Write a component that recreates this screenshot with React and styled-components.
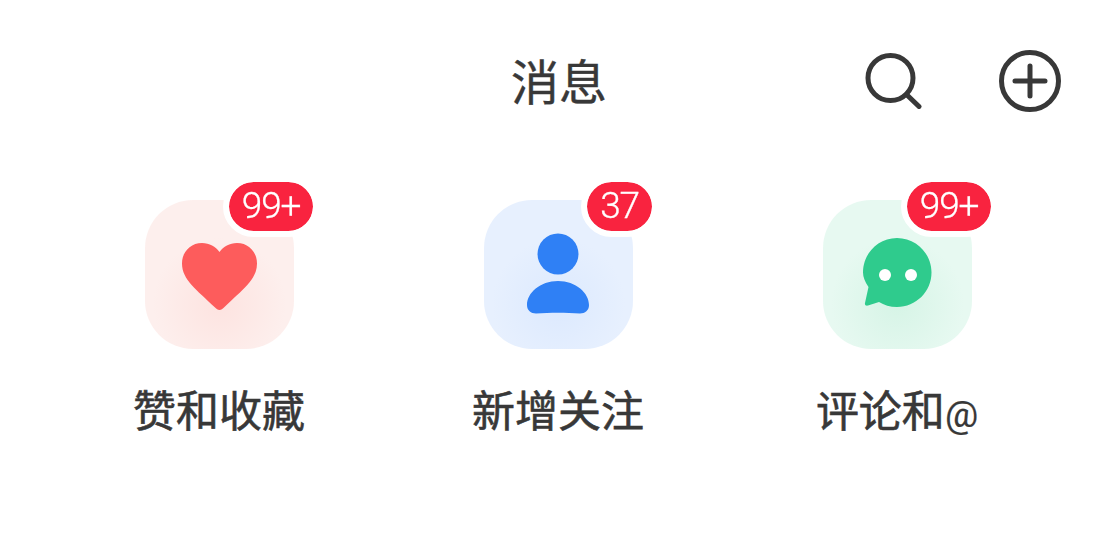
import styled, { createGlobalStyle } from 'styled-components';

const GlobalStyle = createGlobalStyle`
    html, body {
        margin: 0;
        background: #fff;
    }
    body {
        font-family: "Noto Sans CJK SC", "Noto Sans", sans-serif;
    }
`;

const Page = styled.div`
    width: 1114px;
    height: 545px;
    overflow: hidden;
    background: #fff;
`;
const Header = styled.header`
    display: grid;
    grid-template-columns: 1fr auto 1fr;
    align-items: center;
    height: 62px;
    padding: 50px 53px 0 57px;
`;
const Title = styled.h1`
    grid-column: 2;
    margin: -5px 0 0;
    font-size: 48px;
    font-weight: 400;
    line-height: 62px;
    color: #383838;
    -webkit-text-stroke: 0.4px #383838;
`;
const Actions = styled.div`
    grid-column: 3;
    display: flex;
    justify-content: flex-end;
    gap: 77px;
`;
const IconButton = styled.button`
    display: flex;
    padding: 0;
    border: 0;
    background: none;
    color: #383838;
    filter: blur(0.4px);
`;
const Entries = styled.main`
    display: grid;
    grid-template-columns: repeat(3, 339px);
    margin-top: 88px;
    padding-left: 50px;
`;
const Entry = styled.div`
    display: flex;
    flex-direction: column;
    align-items: center;
`;
const Tile = styled.div`
    position: relative;
    width: 149px;
    height: 149px;
    border-radius: 48px;
    background: radial-gradient(circle at 50% 70%, ${(props) => props.$glow} 0, ${(props) => props.$bg} 52%);
`;
const TileIcon = styled.svg`
    display: block;
    filter: blur(0.5px);
`;
const Badge = styled.span`
    position: absolute;
    top: -18px;
    left: ${(props) => props.$left}px;
    display: flex;
    align-items: center;
    justify-content: center;
    box-sizing: border-box;
    width: ${(props) => props.$width}px;
    height: 49px;
    padding-bottom: 2px;
    border-radius: 25px;
    outline: 6px solid #fff;
    background: #f9233f;
    color: #fff;
    font-family: "Roboto", "Noto Sans", sans-serif;
    font-size: 37px;
    font-weight: 300;
    letter-spacing: -1.2px;
    line-height: 1;
    -webkit-text-stroke: 0.3px #fff;
    filter: blur(0.3px);
`;
const Label = styled.div`
    margin-top: 28px;
    margin-left: -1px;
    font-size: 43px;
    font-weight: 400;
    line-height: 62px;
    color: #383838;
    white-space: nowrap;
    -webkit-text-stroke: 0.6px #383838;
`;
const LabelSymbol = styled.span`
    font-family: "Roboto", "Noto Sans", sans-serif;
    font-size: 37px;
    font-weight: 400;
    -webkit-text-stroke: 0.2px #383838;
`;

const Heart = () => (
    <TileIcon width="149" height="149" viewBox="0 0 149 149">
        <path
            d="M74.500 110 C72.800 110 71.500 109 69.500 107 C52 90 37 80 37 63.500 C37 52 45.500 43 57 43 C64.500 43 70.500 46.500 74.500 52 C78.500 46.500 84.500 43 92 43 C103.500 43 112 52 112 63.500 C112 80 97 90 79.500 107 C77.500 109 76.200 110 74.500 110 Z"
            fill="#fd5c5c"
        />
    </TileIcon>
);

const Person = () => (
    <TileIcon width="149" height="149" viewBox="0 0 149 149">
        <circle cx="74" cy="54" r="20.500" fill="#2f80f5" />
        <path
            d="M74 81 C92 81 105 93 105 105 C105 110.500 101 113.500 96 113.500 C82 112.500 66 112.500 52 113.500 C47 113.500 43 110.500 43 105 C43 93 56 81 74 81 Z"
            fill="#2f80f5"
        />
    </TileIcon>
);

const Chat = () => (
    <TileIcon width="149" height="149" viewBox="0 0 149 149">
        <path
            d="M74 38 C93 38 108.500 53.500 108.500 72.500 C108.500 91.500 93 107 74 107 C67 107 61 105 56 102 L45 105.500 C43 106 41.500 105 42 103 L45.500 87 C42 82 40 77 40 72.500 C40 53.500 55 38 74 38 Z"
            fill="#2fcb8d"
        />
        <circle cx="62" cy="75" r="6" fill="#fff" />
        <circle cx="88" cy="75" r="6" fill="#fff" />
    </TileIcon>
);

const entries = [
    { id: 'likes', label: '赞和收藏', count: '99+', bg: '#fdefed', glow: '#fde3e0', left: 84, width: 84, Icon: Heart },
    { id: 'follows', label: '新增关注', count: '37', bg: '#e7f0fe', glow: '#dce9fe', left: 103, width: 65, Icon: Person },
    { id: 'comments', label: '评论和', symbol: '@', count: '99+', bg: '#e7f9f1', glow: '#d6f4e6', left: 84, width: 84, Icon: Chat },
];

const App = () => {
    return (
        <Page>
            <GlobalStyle />
            <Header>
                <Title>消息</Title>
                <Actions>
                    <IconButton aria-label="搜索">
                        <svg width="58" height="60" viewBox="0 0 58 60" fill="none" stroke="currentColor" strokeWidth="5" strokeLinecap="round">
                            <circle cx="26.500" cy="28" r="22.500" />
                            <path d="M42.500 44.500 L55 56.500" />
                        </svg>
                    </IconButton>
                    <IconButton aria-label="添加">
                        <svg width="62" height="62" viewBox="0 0 62 62" fill="none" stroke="currentColor" strokeWidth="5" strokeLinecap="round">
                            <circle cx="31" cy="31" r="28.500" />
                            <path d="M31 16 V46 M16 31 H46" />
                        </svg>
                    </IconButton>
                </Actions>
            </Header>
            <Entries>
                {entries.map(({ id, label, symbol, count, bg, glow, left, width, Icon }) => (
                    <Entry key={id}>
                        <Tile $bg={bg} $glow={glow}>
                            <Icon />
                            <Badge $left={left} $width={width}>{count}</Badge>
                        </Tile>
                        <Label>
                            {label}
                            {symbol && <LabelSymbol>{symbol}</LabelSymbol>}
                        </Label>
                    </Entry>
                ))}
            </Entries>
        </Page>
    );
};

export default App;
